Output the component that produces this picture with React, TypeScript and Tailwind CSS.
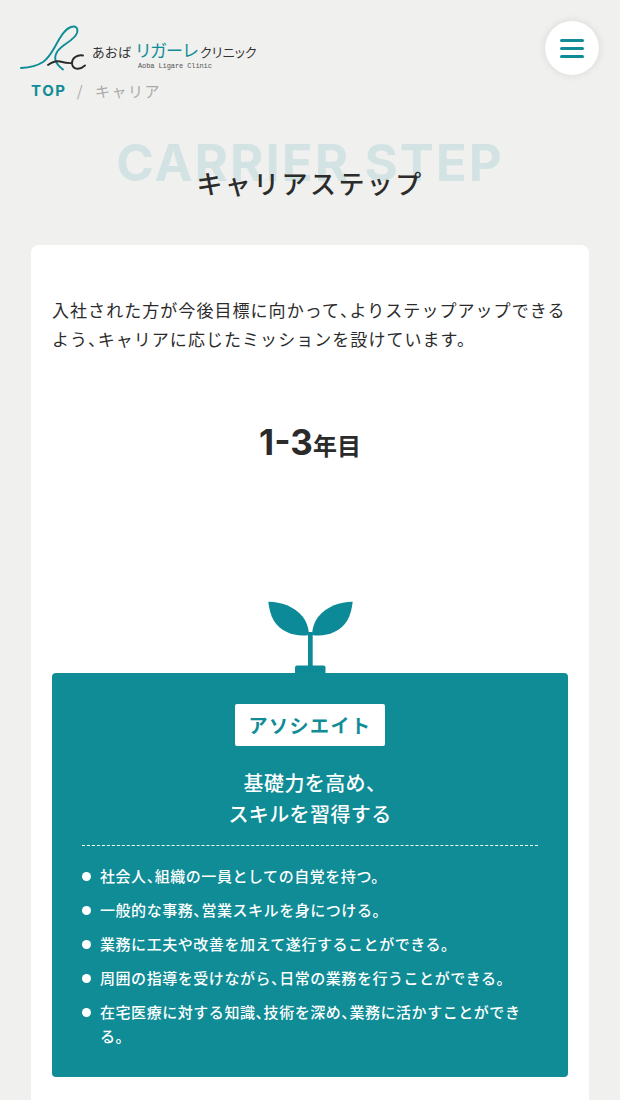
import React from "react";

const jp = "font-['Noto_Sans_CJK_JP','Noto_Sans',sans-serif]";

function Txt({ t }: { t: string }) {
  return (
    <>
      {t.split("、").map((part, i) => (
        <React.Fragment key={i}>
          {i > 0 && <span className="[font-feature-settings:'halt']">、</span>}
          {part}
        </React.Fragment>
      ))}
    </>
  );
}

function Logo() {
  return (
    <div className="relative w-[280px] h-[80px]">
      <svg className="absolute left-0 top-0" width="90" height="75" viewBox="0 0 90 75" fill="none">
        <path d="M21 68 C30 67.5 37 66 43 62 C50 57 53 50 57 43 C61 36 65 29 71 27 C76 25.5 78.5 28 77 33 C74 41 62 44 57 52 C53 59 56 64 63 69.5" stroke="#0f8c96" strokeWidth="1.9" strokeLinecap="round" />
        <path d="M48 65 C52 62 56 60.5 60 61.5 C64 62.5 68 63.5 72 63" stroke="#2b2b2b" strokeWidth="1.9" strokeLinecap="round" />
        <path d="M83 55.5 C77 54.5 72 58 72 63 C72 69 79 71 85 65.5" stroke="#2b2b2b" strokeWidth="1.9" strokeLinecap="round" />
      </svg>
      <div className={`absolute left-[92px] top-[36px] flex items-baseline whitespace-nowrap text-[#333] [font-feature-settings:'palt'] ${jp}`}>
        <span className="text-[13px] leading-[28px] tracking-[0.3px]">あおば</span>
        <span className="ml-[5px] text-[17px] leading-[28px] text-[#0f8c96]">リガーレ</span>
        <span className="ml-[2px] text-[13px] leading-[28px] tracking-[0.1px]">クリニック</span>
      </div>
      <div className="absolute left-[138px] top-[61px] text-[7px] leading-[10px] tracking-[-0.1px] text-[#555] whitespace-nowrap font-['Liberation_Mono',monospace]">Aoba Ligare Clinic</div>
    </div>
  );
}

const items = [
  "社会人、組織の一員としての自覚を持つ。",
  "一般的な事務、営業スキルを身につける。",
  "業務に工夫や改善を加えて遂行することができる。",
  "周囲の指導を受けながら、日常の業務を行うことができる。",
  "在宅医療に対する知識、技術を深め、業務に活かすことができる。",
];

export default function App() {
  return (
    <div className={`relative w-[620px] h-[1100px] overflow-hidden bg-[#f0f0ef] text-[#2b2b2b] ${jp}`}>
      <header className="h-[80px]">
        <Logo />
      </header>
      <div className="absolute right-[21px] top-[21px] w-[54px] h-[54px] rounded-full bg-white shadow-[0_0_8px_rgba(0,0,0,0.1)] flex flex-col items-center justify-center gap-[5px]">
        <span className="block w-[24px] h-[3px] rounded-full bg-[#0f8c96]" />
        <span className="block w-[24px] h-[3px] rounded-full bg-[#0f8c96]" />
        <span className="block w-[24px] h-[3px] rounded-full bg-[#0f8c96]" />
      </div>
      <nav className="flex items-center pl-[31px] h-[22px] text-[15px] leading-[22px] tracking-[1.5px]">
        <span className="font-bold text-[#0f8c96] font-['Inter',sans-serif] tracking-[1.6px]">TOP</span>
        <span className="ml-[10px] text-[#aaa]">/</span>
        <span className="ml-[11px] text-[#aaa]">キャリア</span>
      </nav>
      <section className="relative h-[143px] text-center">
        <div className="absolute left-0 right-0 top-[31px] text-[51px] leading-[60px] font-bold tracking-[2px] text-[#d3e3e4] font-['Inter',sans-serif] whitespace-nowrap">CARRIER STEP</div>
        <h1 className="absolute left-0 right-0 top-[61px] text-[26px] leading-[40px] font-medium tracking-[2.4px]">キャリアステップ</h1>
      </section>
      <main className="mx-[31px] h-[900px] rounded-[8px] bg-white px-[21px] pt-[50px]">
        <p className="text-[17px] leading-[29px] tracking-[1.05px] whitespace-nowrap">
          <Txt t="入社された方が今後目標に向かって、よりステップアップできる" /><br /><Txt t="よう、キャリアに応じたミッションを設けています。" />
        </p>
        <h2 className="mt-[63px] text-center font-bold leading-[52px] h-[52px]">
          <span className="text-[35px] font-['Inter',sans-serif]">1-3</span>
          <span className="text-[24px]">年目</span>
        </h2>
        <div className="mt-[131px] flex justify-center h-[74px]">
          <svg width="90" height="74" viewBox="0 0 90 74">
            <path d="M3.3 2.7 C15 2.5 29 7 38 18 C41.5 23 43.5 28 44 36 C31 38.5 16 33 9 22 C5.5 16 4 9 3.3 2.7 Z" fill="#0c8a98" />
            <path d="M87.7 2.7 C76 2.5 62 7 53 18 C49.5 23 47.5 28 47 36 C60 38.5 75 33 82 22 C85.5 16 87 9 87.7 2.7 Z" fill="#0c8a98" />
            <rect x="43" y="33" width="4.7" height="36" fill="#0c8a98" />
            <rect x="30" y="66.5" width="30.5" height="9" rx="2" fill="#0c8a98" />
          </svg>
        </div>
        <div className="rounded-[4px] bg-[#0f8c96] pt-[31px] pb-[29px] text-white">
          <div className="flex justify-center">
            <div className="w-[150px] h-[42px] bg-white rounded-[2px] text-[#0f8c96] text-[19px] leading-[42px] font-bold tracking-[1.5px] text-center">アソシエイト</div>
          </div>
          <div className="mt-[21px] text-center text-[20px] leading-[31px] font-medium tracking-[0.4px]">
            <Txt t="基礎力を高め、" /><br />スキルを習得する
          </div>
          <div className="mx-[30px] mt-[16px] border-t border-dashed border-white" />
          <ul className="mt-[18px] ml-[30px] mr-[44px] flex flex-col gap-[10px]">
            {items.map((t) => (
              <li key={t} className="relative pl-[18px] text-[15px] leading-[24px] font-medium tracking-[0.55px]">
                <span className="absolute left-0 top-[8px] w-[9px] h-[9px] rounded-full bg-white" />
                <Txt t={t} />
              </li>
            ))}
          </ul>
        </div>
      </main>
    </div>
  );
}
